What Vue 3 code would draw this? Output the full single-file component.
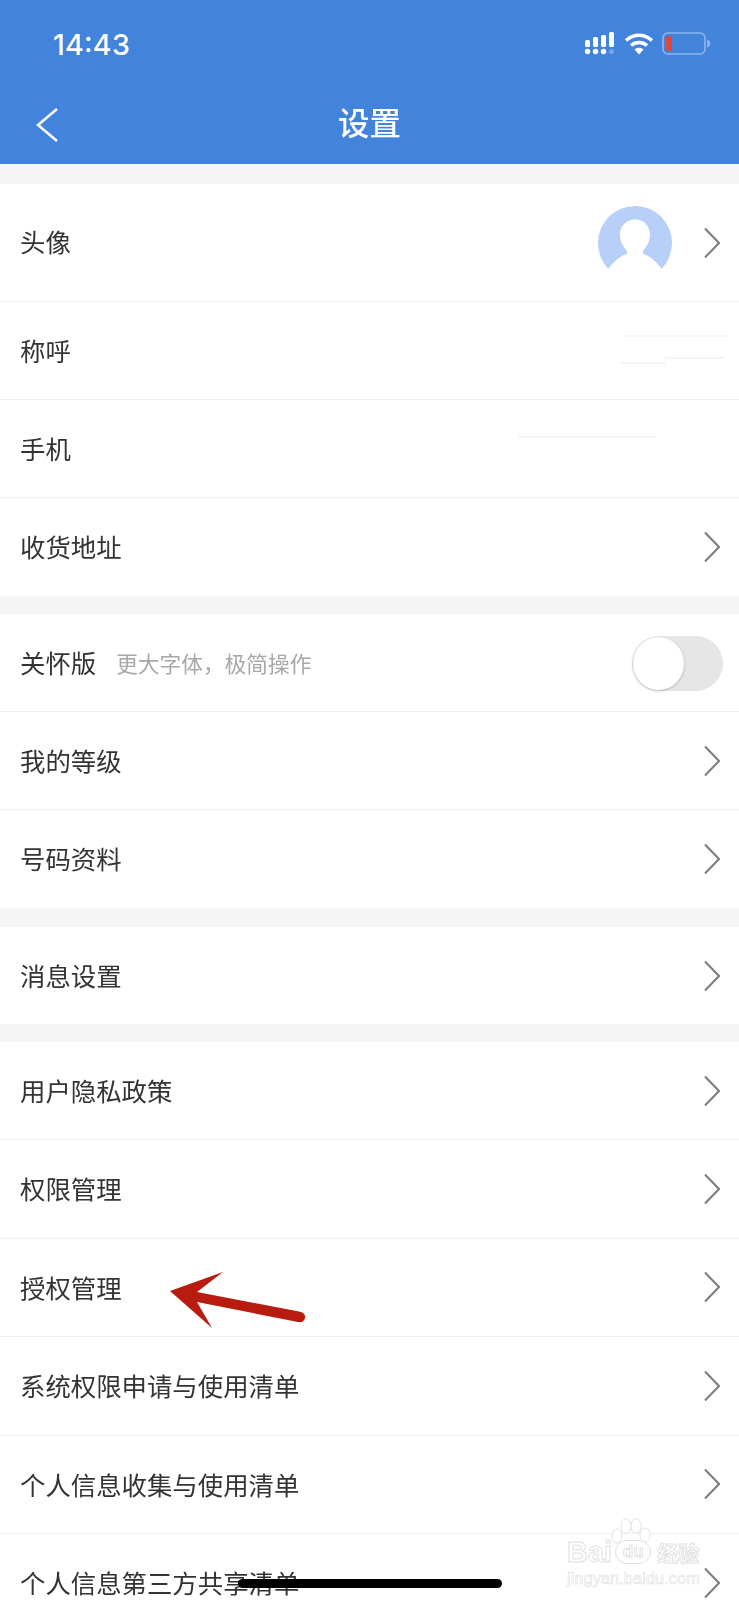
<template>
  <div class="settings-page">
    <header class="app-header">
      <div class="status-bar">
        <span class="status-bar__time">14:43</span>
        <svg class="status-bar__icons" width="128" height="26" viewBox="0 0 128 26">
          <!-- signal -->
          <g fill="#fff">
            <rect x="0" y="9" width="5" height="7" rx="1.5" />
            <rect x="8" y="6" width="5" height="10" rx="1.5" />
            <rect x="16" y="4" width="5" height="12" rx="1.5" />
            <rect x="24" y="1" width="5" height="15" rx="1.5" />
            <circle cx="2.5" cy="20.5" r="2.7" />
            <circle cx="10.5" cy="20.5" r="2.7" />
            <circle cx="18.5" cy="20.5" r="2.7" />
          </g>
          <circle cx="26.5" cy="20.5" r="2.5" fill="#7ea6dd" />
          <!-- wifi -->
          <g fill="none" stroke="#fff" stroke-width="3.4">
            <path d="M41 9.5c7.6-7 18.4-7 26 0" />
            <path d="M46 14.5c4.6-4 11.4-4 16 0" />
          </g>
          <path d="M49.5 18.5c2.6-2.2 6.4-2.2 9 0L54 23.5z" fill="#fff" />
          <!-- battery -->
          <rect x="78" y="2" width="42" height="21" rx="5" fill="none" stroke="#8fb5ec" stroke-width="1.6" />
          <rect x="81" y="5" width="6" height="15" rx="2" fill="#e0463a" />
          <path d="M122 8.5c2 .6 3.4 2.2 3.4 4s-1.4 3.4-3.4 4z" fill="#8fb5ec" />
        </svg>
      </div>
      <div class="nav-bar">
        <svg class="nav-bar__back" width="24" height="36" viewBox="0 0 24 36">
          <path d="M21 2 2 18l19 16" fill="none" stroke="#fff" stroke-width="2.6" />
        </svg>
        <h1 class="nav-bar__title">设置</h1>
      </div>
    </header>

    <section v-for="(group, i) in groups" :key="i" class="group" :class="group.cls">
      <div
        v-for="row in group.rows"
        :key="row.label"
        class="row"
        :class="row.cls"
      >
        <span class="row__label">{{ row.label }}</span>
        <span v-if="row.hint" class="row__hint">{{ row.hint }}</span>

        <svg v-if="row.avatar" class="row__avatar" width="74" height="74" viewBox="0 0 74 74">
          <circle cx="37" cy="37" r="37" fill="#b8d0f8" />
          <path
            d="M37 13.5C46 13.5 52 20 52 29 52 36 48 41 45 45L45 47.5C51 50 58 55 63.3 62.3L63.3 74H10.7L10.7 62.3C16 55 23 50 29 47.5L29 45C26 41 22 36 22 29 22 20 28 13.5 37 13.5z"
            fill="#fff"
          />
        </svg>

        <span v-if="row.toggle" class="toggle"><span class="toggle__knob"></span></span>

        <svg v-if="row.arrow" class="row__chevron" width="16" height="32" viewBox="0 0 16 32">
          <path d="M1 1.5 15 16 1 30.5" fill="none" stroke="#7c7c7c" stroke-width="2" />
        </svg>

        <i v-for="(m, k) in row.marks" :key="k" class="mask-line" :style="m"></i>
      </div>
    </section>

    <svg class="red-arrow" width="140" height="66" viewBox="0 0 140 66">
      <path
        d="M1 27 54 8 28 28 130 47.5Q137 49 136 54 135 59 129 58L28 38 43 64z"
        fill="#b71c0e"
      />
    </svg>

    <div class="watermark">
      <svg class="watermark__paw" width="40" height="28" viewBox="0 0 40 28">
        <g fill="#fff" stroke="#e3e3e3" stroke-width="1">
          <ellipse cx="6" cy="18" rx="5" ry="7" />
          <ellipse cx="15" cy="8" rx="5" ry="7.5" />
          <ellipse cx="25" cy="8" rx="5" ry="7.5" />
          <ellipse cx="34" cy="17" rx="5" ry="7" />
        </g>
      </svg>
      <div class="watermark__top">
        <span>Bai</span><span class="watermark__du">du</span><span class="watermark__cn">经验</span>
      </div>
      <div class="watermark__url">jingyan.baidu.com</div>
    </div>

    <div class="home-bar"></div>
  </div>
</template>

<script setup>
const groups = [
  {
    rows: [
      { label: '头像', avatar: true, arrow: true, cls: 'row--tall' },
      {
        label: '称呼',
        marks: [
          { left: '624px', top: '33px', width: '105px' },
          { left: '665px', top: '55px', width: '59px' },
          { left: '621px', top: '60px', width: '45px' }
        ]
      },
      { label: '手机', marks: [{ left: '518px', top: '36px', width: '138px' }] },
      { label: '收货地址', arrow: true }
    ]
  },
  {
    rows: [
      { label: '关怀版', hint: '更大字体，极简操作', toggle: true },
      { label: '我的等级', arrow: true },
      { label: '号码资料', arrow: true }
    ]
  },
  {
    cls: 'group--wide',
    rows: [{ label: '消息设置', arrow: true, cls: 'row--short' }]
  },
  {
    cls: 'group--legal',
    rows: [
      { label: '用户隐私政策', arrow: true },
      { label: '权限管理', arrow: true },
      { label: '授权管理', arrow: true },
      { label: '系统权限申请与使用清单', arrow: true },
      { label: '个人信息收集与使用清单', arrow: true },
      { label: '个人信息第三方共享清单', arrow: true }
    ]
  }
]
</script>

<style>
html,
body {
  margin: 0;
  background: #f5f5f5;
}
</style>

<style scoped>
.settings-page {
  position: relative;
  height: 1600px;
  overflow: hidden;
  background: #f5f5f5;
  font-family: "Noto Sans CJK SC", "Noto Sans", sans-serif;
  color: #333;
  filter: blur(0.4px);
}

.app-header {
  height: 164px;
  background: #4283dc;
  color: #fff;
}

.status-bar {
  height: 88px;
  display: flex;
  align-items: center;
  justify-content: space-between;
  padding: 0 26px 0 53px;
}

.status-bar__time {
  font-family: Inter, sans-serif;
  font-size: 29px;
  font-weight: 500;
  line-height: 1;
}

.status-bar__icons {
  display: block;
}

.nav-bar {
  position: relative;
  height: 76px;
  box-sizing: border-box;
  padding-bottom: 8px;
  display: flex;
  align-items: center;
  justify-content: center;
}

.nav-bar__back {
  position: absolute;
  left: 36px;
  top: 19px;
}

.nav-bar__title {
  margin: 0;
  font-size: 31.5px;
  font-weight: 500;
  line-height: 1;
}

.group {
  margin-top: 18px;
  background: #fff;
}

.group--wide {
  margin-top: 19px;
}

.app-header + .group {
  margin-top: 20px;
}

.row {
  position: relative;
  height: 98px;
  box-sizing: border-box;
  display: flex;
  align-items: center;
  padding: 0 19px 0 20px;
  border-bottom: 1px solid #f1f1f1;
}

.group .row:last-child {
  border-bottom: 0;
}

.group--legal .row {
  height: 98.4px;
}

.row--tall {
  height: 118px;
}

.row--tall .row__label {
  margin-bottom: 2px;
}

.row--short {
  height: 97px;
}

.row__label {
  font-size: 25.4px;
  line-height: 1;
  white-space: nowrap;
}

.row__hint {
  margin-left: 20px;
  font-size: 21.7px;
  line-height: 1;
  color: #a8a8a8;
}

.row__avatar {
  margin-left: auto;
  margin-right: 32px;
}

.row__chevron {
  flex: none;
  margin-left: auto;
}

.row__avatar + .row__chevron {
  margin-left: 0;
}

.toggle {
  position: relative;
  margin-left: auto;
  margin-right: -3px;
  margin-top: 2px;
  width: 91px;
  height: 55px;
  border-radius: 28px;
  background: #e6e6e6;
}

.toggle__knob {
  position: absolute;
  left: 1px;
  top: 1px;
  width: 51px;
  height: 53px;
  border-radius: 50%;
  background: #fff;
  box-shadow: 0 1px 3px rgba(0, 0, 0, 0.22);
}

.mask-line {
  position: absolute;
  height: 2px;
  background: #f5f5f5;
}

.red-arrow {
  position: absolute;
  left: 169px;
  top: 1264px;
}

.watermark {
  position: absolute;
  left: 567px;
  top: 1518px;
  width: 134px;
  color: #fff;
  -webkit-text-stroke: 1px #e0e0e0;
  font-family: "Liberation Sans", sans-serif;
}

.watermark__paw {
  position: absolute;
  left: 44px;
  top: 0;
}

.watermark__top {
  display: flex;
  align-items: center;
  margin-top: 21px;
  height: 26px;
  font-size: 29px;
  font-weight: 700;
}

.watermark__du {
  position: relative;
  margin-left: 3px;
  width: 34px;
  height: 22px;
  border: 1px solid #e0e0e0;
  border-radius: 12px;
  background: #fff;
  font-size: 17px;
  line-height: 21px;
  text-align: center;
}

.watermark__cn {
  margin-left: 6px;
  font-family: "Noto Sans CJK SC", sans-serif;
  font-size: 21px;
  line-height: 1;
}

.watermark__url {
  margin-top: 4px;
  font-size: 16.5px;
  line-height: 18px;
  -webkit-text-stroke: 0.6px #e0e0e0;
  white-space: nowrap;
}

.home-bar {
  position: absolute;
  left: 238px;
  top: 1579px;
  width: 264px;
  height: 9px;
  border-radius: 5px;
  background: #000;
}
</style>
